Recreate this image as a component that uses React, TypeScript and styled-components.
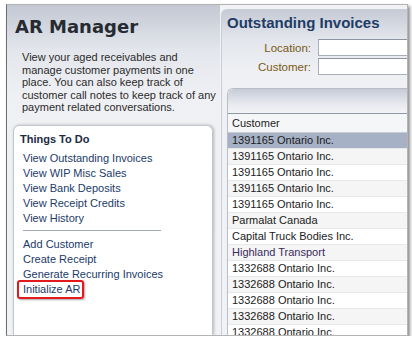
import styled, {createGlobalStyle} from 'styled-components';

const GlobalStyle = createGlobalStyle`
  html, body {
    margin: 0;
    padding: 0;
    background: #ffffff;
  }
  body {
    font-family: "Liberation Sans", Arial, sans-serif;
    font-size: 11px;
    color: #1b1b1b;
  }
`;

const Frame = styled.div`
  display: flex;
  margin: 4px 0 0 6px;
  width: 400px;
  height: 330px;
  border: 1px solid #b4b4b4;
  border-left-color: #6e6e6e;
  box-shadow: 2px 2px 3px rgba(0, 0, 0, 0.45);
  overflow: hidden;
  background: #f1f2f6;
`;

const LeftCol = styled.aside`
  display: flex;
  flex-direction: column;
  width: 200px;
  flex-shrink: 0;
  padding: 0 7px 0 6px;
  background: linear-gradient(#c3c8d3 0, #e3e6ec 45px, #eff0f4 90px, #f1f2f6 100%);
`;

const Title = styled.h1`
  margin: 0 0 0 2px;
  padding-top: 11px;
  font-family: "DejaVu Sans", Verdana, sans-serif;
  font-size: 18px;
  line-height: 22px;
  font-weight: bold;
  color: #262a31;
`;

const Desc = styled.p`
  margin: 13px 0 0 9px;
  line-height: 12.6px;
  color: #2b2b2b;
  white-space: nowrap;
`;

const TodoBox = styled.section`
  flex: 1;
  margin-top: 11px;
  background: #ffffff;
  border: 1px solid #c2c6ce;
  border-bottom: none;
  border-radius: 6px 6px 0 0;
  box-shadow: 1px 0 3px rgba(0, 0, 0, 0.25);
`;

const TodoHead = styled.h2`
  margin: 0;
  padding: 6px 0 0 6px;
  font-size: 11px;
  line-height: 14px;
  font-weight: bold;
  color: #1c2a44;
`;

const LinkList = styled.ul`
  list-style: none;
  margin: 5px 0 0;
  padding: 0 0 0 9px;
`;

const LinkItem = styled.li`
  line-height: 15px;
  color: #213b69;
`;

const Divider = styled.li`
  width: 138px;
  height: 1px;
  margin: 4px 0 6px;
  background: #a3a9b6;
`;

const Highlight = styled.span`
  position: relative;
  &::after {
    content: '';
    position: absolute;
    left: -6px;
    right: -4px;
    top: -3px;
    bottom: -4px;
    border: 2px solid #e3191b;
    border-radius: 3px;
    box-shadow: 1px 1px 2px rgba(0, 0, 0, 0.35);
  }
`;

const RightPanel = styled.main`
  flex: 1;
  min-width: 0;
  margin: 4px 0 0 1px;
  padding: 0 0 0 5px;
  border-left: 1px solid #c9cdd6;
  border-top: 1px solid #c9cdd6;
  border-top-left-radius: 6px;
  background: linear-gradient(#c5cad5 0, #e2e5eb 28px, #eef0f3 60px, #f1f2f5 100%);
`;

const PanelTitle = styled.h2`
  margin: 0;
  padding-top: 4px;
  font-size: 15px;
  line-height: 18px;
  font-weight: bold;
  color: #1e3c66;
  white-space: nowrap;
`;

const Form = styled.div`
  display: grid;
  grid-template-columns: 84px 200px;
  column-gap: 7px;
  row-gap: 2px;
  margin-top: 7px;
`;

const Label = styled.label`
  display: flex;
  align-items: center;
  justify-content: flex-end;
  color: #7a5a17;
  font-size: 11.5px;
`;

const Input = styled.div`
  height: 15px;
  background: #ffffff;
  border: 1px solid #a9afba;
  border-top-color: #8e95a2;
`;

const GridBox = styled.div`
  margin-top: 13px;
  border: 1px solid #b8bdc7;
  border-right: none;
  border-top-left-radius: 6px;
  background: #ffffff;
`;

const Toolbar = styled.div`
  height: 24px;
  border-top-left-radius: 6px;
  background: linear-gradient(#c6cbd6 0, #e6e8ee 60%, #f3f4f7 100%);
  border-bottom: 1px solid #8f97a5;
`;

const HeadRow = styled.div`
  height: 18px;
  line-height: 18px;
  padding-left: 4px;
  background: #f5f6f8;
  border-bottom: 1px solid #c7cbd2;
  color: #1b1b1b;
`;

const Row = styled.div<{$selected?: boolean; $alt?: boolean; $tone?: string}>`
  height: 15px;
  line-height: 15px;
  padding-left: 4px;
  white-space: nowrap;
  border-bottom: 1px solid #e7e8ea;
  color: ${(p) => p.$tone || '#1b1b1b'};
  background: ${(p) => (p.$selected ? '#a6b1c6' : p.$alt ? '#f5f5f5' : '#ffffff')};
`;

const customers = [
  '1391165 Ontario Inc.',
  '1391165 Ontario Inc.',
  '1391165 Ontario Inc.',
  '1391165 Ontario Inc.',
  '1391165 Ontario Inc.',
  'Parmalat Canada',
  'Capital Truck Bodies Inc.',
  'Highland Transport',
  '1332688 Ontario Inc.',
  '1332688 Ontario Inc.',
  '1332688 Ontario Inc.',
  '1332688 Ontario Inc.',
  '1332688 Ontario Inc.',
];

const App = () => {
  return (
    <>
      <GlobalStyle />
      <Frame>
        <LeftCol>
          <Title>AR Manager</Title>
          <Desc>
            View your aged receivables and
            <br />
            manage customer payments in one
            <br />
            place. You can also keep track of
            <br />
            customer call notes to keep track of any
            <br />
            payment related conversations.
          </Desc>
          <TodoBox>
            <TodoHead>Things To Do</TodoHead>
            <LinkList>
              <LinkItem>View Outstanding Invoices</LinkItem>
              <LinkItem>View WIP Misc Sales</LinkItem>
              <LinkItem>View Bank Deposits</LinkItem>
              <LinkItem>View Receipt Credits</LinkItem>
              <LinkItem>View History</LinkItem>
              <Divider />
              <LinkItem>Add Customer</LinkItem>
              <LinkItem>Create Receipt</LinkItem>
              <LinkItem>Generate Recurring Invoices</LinkItem>
              <LinkItem>
                <Highlight>Initialize AR</Highlight>
              </LinkItem>
            </LinkList>
          </TodoBox>
        </LeftCol>
        <RightPanel>
          <PanelTitle>Outstanding Invoices</PanelTitle>
          <Form>
            <Label>Location:</Label>
            <Input />
            <Label>Customer:</Label>
            <Input />
          </Form>
          <GridBox>
            <Toolbar />
            <HeadRow>Customer</HeadRow>
            {customers.map((name, i) => (
              <Row
                key={i}
                $selected={i === 0}
                $alt={i % 2 === 1}
                $tone={name === 'Highland Transport' ? '#3a2a5c' : undefined}
              >
                {name}
              </Row>
            ))}
          </GridBox>
        </RightPanel>
      </Frame>
    </>
  );
};

export default App;
